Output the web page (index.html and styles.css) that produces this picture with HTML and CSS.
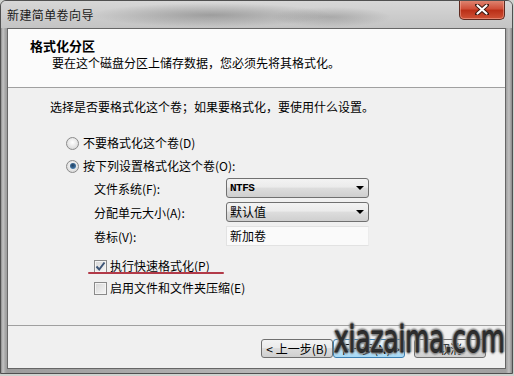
FILE: index.html
```html
<!DOCTYPE html>
<html lang="zh-CN">
<head>
<meta charset="utf-8">
<title>新建简单卷向导</title>
<link rel="stylesheet" href="styles.css">
</head>
<body>
<div class="window">
  <div class="titlebar">
    <span class="title">新建简单卷向导</span>
    <button class="close" aria-label="关闭">
      <svg width="14" height="11" viewBox="0 0 14 11"><path d="M2 1 L12 10 M12 1 L2 10" stroke="#3a1810" stroke-width="4" stroke-linecap="round"/><path d="M2.5 1.5 L11.5 9.5 M11.5 1.5 L2.5 9.5" stroke="#ffffff" stroke-width="2.2" stroke-linecap="round"/></svg>
    </button>
  </div>
  <div class="frame">
    <div class="client">
      <div class="header">
        <div class="h-title">格式化分区</div>
        <div class="h-sub">要在这个磁盘分区上储存数据，您必须先将其格式化。</div>
      </div>
      <div class="main">
        <p class="desc">选择是否要格式化这个卷；如果要格式化，要使用什么设置。</p>
        <div class="radios">
          <label class="radio-row"><span class="radio"></span>不要格式化这个卷(D)</label>
          <label class="radio-row"><span class="radio on"></span>按下列设置格式化这个卷(O):</label>
        </div>
        <div class="form">
          <span class="lbl">文件系统(F):</span>
          <div class="combo"><span class="mono">NTFS</span><span class="arrow"></span></div>
          <span class="lbl">分配单元大小(A):</span>
          <div class="combo"><span>默认值</span><span class="arrow"></span></div>
          <span class="lbl">卷标(V):</span>
          <div class="field">新加卷</div>
        </div>
        <div class="checks">
          <label class="check-row marked"><span class="check on"><svg width="11" height="11" viewBox="0 0 11 11"><path d="M1.5 5.5 L4.2 8.5 L9.5 1.5" fill="none" stroke="#3d5577" stroke-width="2"/></svg></span>执行快速格式化(P)</label>
          <label class="check-row"><span class="check"></span>启用文件和文件夹压缩(E)</label>
        </div>
      </div>
      <div class="footer">
        <button class="btn">&lt; 上一步(B)</button>
        <button class="btn default">下一步(N) &gt;</button>
        <button class="btn gap">取消</button>
      </div>
    </div>
  </div>
</div>
<div class="watermark">xiazaima.com</div>
</body>
</html>
```

FILE: styles.css
```css
html, body {
  margin: 0;
  padding: 0;
}
body {
  width: 514px;
  height: 376px;
  overflow: hidden;
  background: #cfd2cf;
  font-family: "Noto Sans CJK SC", "Liberation Sans", sans-serif;
  font-size: 12px;
  color: #000;
  position: relative;
}
.window {
  width: 513px;
  height: 374px;
  box-sizing: border-box;
  border: 1px solid #505050;
  border-radius: 6px 6px 0 0;
  display: flex;
  flex-direction: column;
  background: #b9b9b9;
  overflow: hidden;
}
.titlebar {
  height: 27px;
  flex: none;
  display: flex;
  align-items: center;
  padding: 0 7px 0 6px;
  background:
    radial-gradient(ellipse 120px 12px at 210px 14px, rgba(70,70,70,0.35), rgba(70,70,70,0) 100%),
    radial-gradient(ellipse 60px 10px at 330px 16px, rgba(70,70,70,0.25), rgba(70,70,70,0) 100%),
    linear-gradient(#d7d7d7, #cbcbcb 60%, #c4c4c4);
}
.title {
  font-size: 12px;
  letter-spacing: 0.4px;
  color: #1a1a1a;
  line-height: 16px;
}
.close {
  margin-left: auto;
  align-self: flex-start;
  margin-top: -1px;
  width: 46px;
  height: 20px;
  padding: 0;
  border: 1px solid #5e2a20;
  border-top: none;
  border-radius: 0 0 5px 5px;
  background: linear-gradient(#e08a76, #d0503a 45%, #bb3018 55%, #cf5236);
  display: flex;
  align-items: center;
  justify-content: center;
  box-shadow: inset 0 0 0 1px rgba(255,190,175,0.45);
}
.frame {
  flex: 1;
  display: flex;
  padding: 0 6px 4px 6px;
  background: linear-gradient(90deg, #8e8e8e, #c4c4c4 2px, #a8a8a8 4px, #9c9c9c 6px, #b6b6b6 50%, #a0a0a0 calc(100% - 6px), #c0c0c0 calc(100% - 3px), #8a8a8a);
}
.client {
  flex: 1;
  display: flex;
  flex-direction: column;
  border: 1px solid #666;
  background: #f0f0f0;
}
.header {
  height: 59px;
  flex: none;
  box-sizing: border-box;
  border-bottom: 1px solid #a0a0a0;
  background: #fbfbfb;
  padding: 8px 0 0 22px;
}
.h-title {
  font-weight: bold;
  font-size: 13px;
  line-height: 17px;
}
.h-sub {
  line-height: 17px;
  padding-left: 22px;
}
.main {
  flex: 1;
  padding: 11px 0 0 42px;
}
.desc {
  margin: 0;
  line-height: 16px;
}
.radios {
  margin-top: 20px;
  padding-left: 16px;
  display: flex;
  flex-direction: column;
  gap: 7px;
}
.radio-row, .check-row {
  display: flex;
  align-items: center;
  line-height: 16px;
  gap: 4px;
}
.radio {
  width: 11px;
  height: 11px;
  border-radius: 50%;
  border: 1px solid #8a8a8a;
  background: radial-gradient(circle at 50% 40%, #ffffff, #d9d9d9 80%);
  display: flex;
  align-items: center;
  justify-content: center;
}
.radio.on::after {
  content: "";
  width: 6px;
  height: 6px;
  border-radius: 50%;
  background: radial-gradient(circle at 45% 40%, #243f5e, #3c6f9e 60%, #7fb0d8);
}
.form {
  margin-top: 4px;
  padding-left: 44px;
  display: grid;
  grid-template-columns: 132px 143px;
  grid-auto-rows: 20px;
  row-gap: 4px;
  align-items: center;
}
.combo {
  height: 20px;
  box-sizing: border-box;
  border: 1px solid #707070;
  border-radius: 3px;
  background: linear-gradient(#f3f3f3, #ebebeb 45%, #dddddd 50%, #cfcfcf);
  display: flex;
  align-items: center;
  padding: 0 4px 0 3px;
  line-height: 16px;
}
.mono {
  font-family: "Liberation Mono", monospace;
  font-size: 11px;
  font-weight: bold;
  letter-spacing: -0.5px;
}
.arrow {
  margin-left: auto;
  width: 0;
  height: 0;
  border-left: 4px solid transparent;
  border-right: 4px solid transparent;
  border-top: 4px solid #000;
}
.field {
  height: 20px;
  box-sizing: border-box;
  border: 1px solid #e2e2e2;
  border-right-color: #ececec;
  background: #fafafa;
  padding: 0 3px;
  line-height: 18px;
}
.checks {
  margin-top: 12px;
  padding-left: 44px;
  display: flex;
  flex-direction: column;
  gap: 6px;
}
.check-row {
  gap: 3px;
  position: relative;
}
.check {
  width: 11px;
  height: 11px;
  border: 1px solid #8a8a8a;
  background: linear-gradient(135deg, #d6d6d6, #f6f6f6);
  box-shadow: inset 0 0 0 1px #f4f4f4;
  display: flex;
  align-items: center;
  justify-content: center;
}
.check svg { display: block; }
.marked::after {
  content: "";
  position: absolute;
  left: -6px;
  width: 136px;
  top: 14px;
  height: 2px;
  background: #b23a48;
  border-radius: 1px;
}
.footer {
  height: 43px;
  flex: none;
  border-top: 1px solid #a0a0a0;
  display: flex;
  align-items: flex-start;
  justify-content: flex-end;
  padding: 13px 19px 0 0;
  box-sizing: border-box;
}
.btn {
  width: 72px;
  height: 19px;
  box-sizing: border-box;
  border: 1px solid #707070;
  border-radius: 3px;
  background: linear-gradient(#f3f3f3, #ebebeb 45%, #dddddd 50%, #cfcfcf);
  font-family: "Noto Sans CJK SC", "Liberation Sans", sans-serif;
  font-size: 12px;
  line-height: 15px;
  padding: 0;
  color: #000;
}
.btn.default {
  border-color: #3c7fb1;
  background: linear-gradient(#eaf6fd, #d9f0fc 45%, #bee6fd 50%, #a7d9f5);
}
.btn.gap {
  margin-left: 9px;
}
.watermark {
  position: absolute;
  left: 334px;
  top: 317px;
  font-family: "DejaVu Sans Condensed", "DejaVu Sans", sans-serif;
  font-stretch: condensed;
  font-size: 38px;
  line-height: 44px;
  color: #2e2e2e;
  transform: scaleX(0.72);
  transform-origin: left top;
  -webkit-text-stroke: 0.8px #262626;
  text-shadow: 0 0 1px #7a7a7a, 0 0 2px #7a7a7a, 0 0 3px #888, 2px 0 2px #888, -2px 0 2px #888, 0 2px 2px #888, 0 -2px 2px #888;
}
```
